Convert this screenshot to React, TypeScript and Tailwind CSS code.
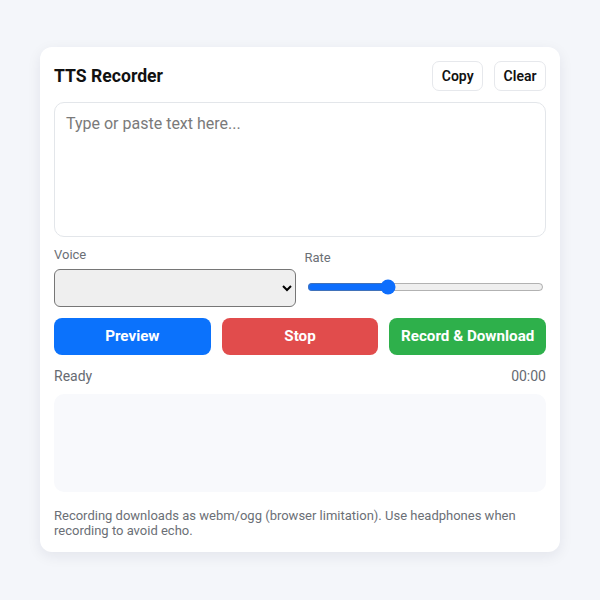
import React, { useState } from 'react';

export default function App() {
  const [text, setText] = useState('');
  const [rate, setRate] = useState(1);

  return (
    <div className="min-h-[600px] w-full bg-[#f4f6fa] pt-[47px] font-['Roboto','Liberation_Sans',sans-serif]">
      <div className="mx-auto w-[520px] rounded-[12px] bg-white p-[14px] shadow-[0_4px_14px_rgba(20,30,60,0.08)]">
        <div className="flex h-[30px] items-center justify-between">
          <h1 className="text-[17.6px] font-bold text-[#111]">TTS Recorder</h1>
          <div className="flex gap-[11px]">
            <button className="h-[30px] rounded-[7px] border border-[#e6e8ec] bg-white px-[8.5px] text-[14px] font-semibold text-[#111]">
              Copy
            </button>
            <button className="h-[30px] rounded-[7px] border border-[#e6e8ec] bg-white px-[8.5px] text-[14px] font-semibold text-[#111]">
              Clear
            </button>
          </div>
        </div>

        <textarea
          value={text}
          onChange={(e) => setText(e.target.value)}
          placeholder="Type or paste text here..."
          className="mt-[11px] block h-[135px] w-full resize-none rounded-[10px] border border-[#e3e6ea] px-[11px] py-[9px] text-[16px] text-[#222] placeholder:text-[#7a7a7a] outline-none"
        />

        <div className="mt-[10px] grid grid-cols-2 gap-[9px]">
          <div>
            <label className="block text-[13px] leading-[16px] text-[#6b6f76]">Voice</label>
            <select className="mt-[6px] block h-[38px] w-full rounded-[6px] border border-[#767676] bg-[#efefef] px-2 text-[14px]">
              <option value=""></option>
            </select>
          </div>
          <div>
            <label className="mt-[3px] block text-[13px] leading-[16px] text-[#6b6f76]">Rate</label>
            <div className="mt-[13px] px-[2px]">
              <input
                type="range"
                min={0.5}
                max={2}
                step={0.1}
                value={rate}
                onChange={(e) => setRate(Number(e.target.value))}
                className="block w-full accent-[#0d6efd]"
              />
            </div>
          </div>
        </div>

        <div className="mt-[11px] grid grid-cols-3 gap-[11px]">
          <button className="h-[37px] rounded-[8px] bg-[#0b72fc] text-[15.2px] font-bold text-white">Preview</button>
          <button className="h-[37px] rounded-[8px] bg-[#e14c4c] text-[15.2px] font-bold text-white">Stop</button>
          <button className="h-[37px] rounded-[8px] bg-[#2eb04b] text-[15.2px] font-bold text-white">Record &amp; Download</button>
        </div>

        <div className="mt-[11px] flex h-[20px] items-center justify-between text-[14px] text-[#666b72]">
          <span>Ready</span>
          <span>00:00</span>
        </div>

        <div className="mt-[8px] h-[98px] rounded-[10px] bg-[#f8f9fc]" />

        <p className="mt-[16px] text-[13px] leading-[15px] text-[#6b6f76]">
          Recording downloads as webm/ogg (browser limitation). Use headphones when recording to avoid echo.
        </p>
      </div>
    </div>
  );
}
